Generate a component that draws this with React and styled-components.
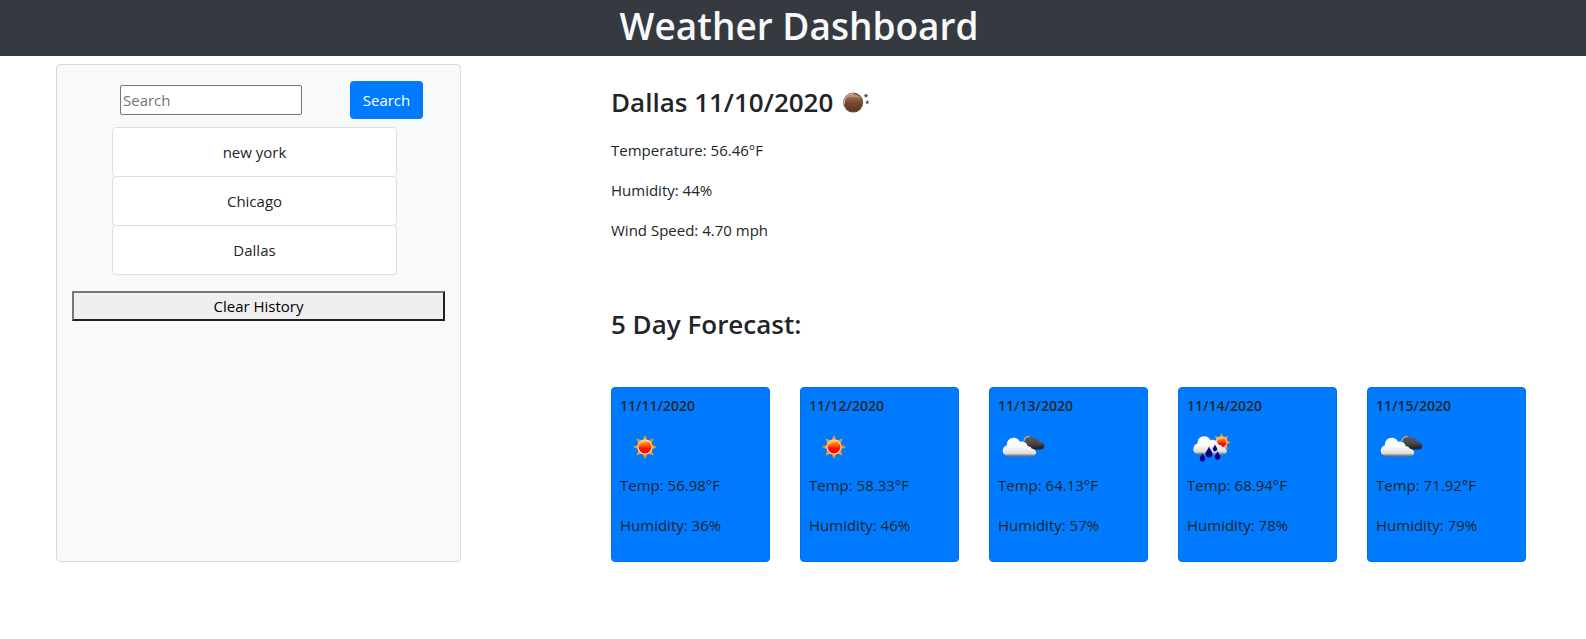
import React from "react";
import styled, { createGlobalStyle } from "styled-components";

const GlobalStyle = createGlobalStyle`
  *, *::before, *::after { box-sizing: border-box; }
  body {
    margin: 0;
    background: #fff;
    color: #212529;
    font-family: "Open Sans", "Noto Sans", sans-serif;
    font-size: 15px;
    line-height: 24px;
  }
`;

const Header = styled.header`
  background: #343a40;
  color: #f8f9fa;
  height: 56px;
  margin-bottom: 8px;
  text-align: center;
`;

const Title = styled.h1`
  margin: 0;
  font-size: 37px;
  font-weight: 600;
  line-height: 52px;
  padding-left: 12px;
`;

const Main = styled.main`
  display: grid;
  grid-template-columns: minmax(0, 27fr) minmax(0, 61fr);
  column-gap: 150px;
  padding: 0 60px 0 56px;
`;

const Sidebar = styled.aside`
  background: #f8f9fa;
  border: 1px solid #d8dadd;
  border-radius: 4px;
  padding: 16px 15px;
`;

const SearchForm = styled.form`
  display: flex;
  align-items: center;
  justify-content: space-between;
  padding: 0 22px 0 48px;
  margin-bottom: 8px;
`;

const SearchInput = styled.input`
  width: 182px;
  height: 30px;
  padding: 1px 2px;
  border: 1px solid #767676;
  border-radius: 2px;
  background: #fff;
  font: inherit;
  &::placeholder { color: #757575; opacity: 1; }
`;

const SearchButton = styled.button`
  width: 73px;
  height: 38px;
  padding: 0;
  border: 0;
  border-radius: 4px;
  background: #007bff;
  color: #fff;
  font: inherit;
`;

const HistoryList = styled.ul`
  list-style: none;
  margin: 0 48px 16px 40px;
  padding: 0;
`;

const HistoryItem = styled.li`
  background: #fff;
  border: 1px solid #dfdfdf;
  border-radius: 4px;
  padding: 12px 20px;
  text-align: center;
  & + & { margin-top: -1px; }
`;

const ClearButton = styled.button`
  display: block;
  width: 100%;
  height: 30px;
  padding: 0;
  border: 2px solid;
  border-color: #767676 #212121 #212121 #767676;
  background: #efefef;
  color: #000;
  font: inherit;
`;

const CurrentWeather = styled.section`
  padding-top: 13px;
  margin-bottom: 65px;
`;

const CityHeading = styled.h2`
  display: flex;
  align-items: center;
  margin: 0 0 11px;
  font-size: 26px;
  font-weight: 600;
  line-height: 34px;
`;

const ForecastHeading = styled.h2`
  margin: 0 0 46px;
  font-size: 26px;
  font-weight: 600;
  line-height: 34px;
`;

const Reading = styled.p`
  margin: 0 0 16px;
  white-space: nowrap;
`;

const CardRow = styled.div`
  display: grid;
  grid-template-columns: repeat(5, minmax(0, 1fr));
  column-gap: 30px;
`;

const Card = styled.article`
  background: #007bff;
  border: 1px solid #006fe6;
  border-radius: 4px;
  padding: 8px;
`;

const CardDate = styled.h3`
  margin: 0 0 6px;
  font-size: 14px;
  font-weight: 600;
  line-height: 20px;
`;

const Icon = styled.svg`
  display: block;
  flex: none;
  width: 50px;
  height: 50px;
  margin-bottom: ${(p) => (p.$inCard ? "1px" : "0")};
`;

const CLOUD = "M11 34.5C7.5 34.5 4.7 32 4.7 28.8C4.7 26 6.4 24 8.9 23.2C8.8 18.8 11.6 15.8 15.5 15.8C18.4 15.8 20.8 17.3 22 19.8C25.5 18.4 29.4 20.8 29.8 24.4C31.6 24.1 33 25 33.5 26.4C36.3 26.6 38.2 28.5 38.2 30.6C38.2 33 36.3 34.5 33.8 34.5Z";
const DARK_CLOUD = "M25.5 19C25.8 15.8 28.2 13.7 31.2 13.7C33.5 13.7 35 14.8 35.7 16.3C38.4 15.2 41.2 17.2 41.4 20.2C44.2 19.8 46.4 21.5 46.4 24C46.4 26 44.8 27.4 42.6 27.4H30Z";
const RAY = "M0 -12L2.6 -6.5H-2.6Z";
const DROP = "M0 -4.4C1 -2 2.8 -.6 2.8 1.3C2.8 3 1.5 4.2 0 4.2S-2.8 3 -2.8 1.3C-2.8 -.6 -1 -2 0 -4.4Z";
const STAR = "M0 -2.5L.7 -.8L2.5 -.7L1.1 .4L1.6 2.2L0 1.2L-1.6 2.2L-1.1 .4L-2.5 -.7L-.7 -.8Z";
const ANGLES = [0, 45, 90, 135, 180, 225, 270, 315];

function Sun({ id, transform }) {
  return (
    <g transform={transform}>
      <defs>
        <linearGradient id={id} x1="0" y1="0" x2="0" y2="1">
          <stop offset="0" stopColor="#ffa21a" />
          <stop offset=".4" stopColor="#ff5a08" />
          <stop offset=".6" stopColor="#ff1000" />
          <stop offset="1" stopColor="#f00" />
        </linearGradient>
      </defs>
      {ANGLES.map((a) => (
        <path key={a} d={RAY} fill="#f7981d" transform={`rotate(${a})`} />
      ))}
      <circle r="7.5" fill="#ffe6c4" />
      <circle r="6.5" fill={`url(#${id})`} />
      <path d="M-5.4 -1C-5 -6.6 1 -7 4 -4.6C0 -5 -4 -3.6 -5.4 -1Z" fill="#ffd38a" opacity=".6" />
    </g>
  );
}

function CloudFill({ id }) {
  return (
    <linearGradient id={id} x1="0" y1="0" x2="0" y2="1">
      <stop offset="0" stopColor="#fff" />
      <stop offset=".5" stopColor="#fafafa" />
      <stop offset=".84" stopColor="#dcdcdc" />
      <stop offset=".92" stopColor="#8d9296" />
      <stop offset="1" stopColor="#6c747c" />
    </linearGradient>
  );
}

function MoonIcon() {
  return (
    <Icon viewBox="3 -1 50 50" role="img" aria-label="Clear night">
      <defs>
        <linearGradient id="moon" x1="0" y1="0" x2="0" y2="1">
          <stop offset="0" stopColor="#b98a6c" />
          <stop offset=".35" stopColor="#87593b" />
          <stop offset=".5" stopColor="#744a30" />
          <stop offset="1" stopColor="#573722" />
        </linearGradient>
      </defs>
      <circle cx="23.2" cy="24.6" r="10" fill="#7c523a" />
      <circle cx="23.4" cy="24.8" r="9" fill="url(#moon)" />
      <path d="M14.4 25.5C14.2 19.5 18 15.8 23.5 15.7" fill="none" stroke="#e6d0c2" strokeWidth="1" />
      <path d="M17 19.5C19 16.4 27 16.2 30 20C26 18.6 21 18.4 17 19.5Z" fill="#d9b8a4" opacity=".5" />
      <path d={STAR} fill="#6e4a37" transform="translate(36 17.6)" />
      <path d={STAR} fill="#6e4a37" transform="translate(37.3 24.2) scale(.9)" />
    </Icon>
  );
}

function WeatherIcon({ kind, id }) {
  if (kind === "sun") {
    return (
      <Icon $inCard viewBox="0 0 50 50" role="img" aria-label="Clear">
        <Sun id={`${id}-sun`} transform="translate(25 25)" />
      </Icon>
    );
  }
  if (kind === "rain") {
    return (
      <Icon $inCard viewBox="0 0 50 50" role="img" aria-label="Rain">
        <defs><CloudFill id={`${id}-cloud`} /></defs>
        <Sun id={`${id}-sun`} transform="translate(34.5 20.3) scale(.78)" />
        <path d={CLOUD} fill={`url(#${id}-cloud)`} transform="translate(1.6 -1.6)" />
        <g fill="#00008b" stroke="#001f9c" strokeWidth=".3">
          <path d={DROP} transform="translate(15.4 35.6) scale(.95)" />
          <path d={DROP} transform="translate(22 30.3) scale(1.2)" />
          <path d={DROP} transform="translate(28 26) scale(.76)" />
          <path d={DROP} transform="translate(30.5 33.8) scale(.95)" />
        </g>
      </Icon>
    );
  }
  return (
    <Icon $inCard viewBox="0 0 50 50" role="img" aria-label="Broken clouds">
      <defs>
        <CloudFill id={`${id}-cloud`} />
        <linearGradient id={`${id}-dark`} x1="0" y1="0" x2="0" y2="1">
          <stop offset="0" stopColor="#626262" />
          <stop offset=".6" stopColor="#444" />
          <stop offset=".85" stopColor="#292929" />
          <stop offset="1" stopColor="#202020" />
        </linearGradient>
      </defs>
      <path d={DARK_CLOUD} fill={`url(#${id}-dark)`} />
      <path d="M26 19C26.3 16 28.4 14.3 31.8 14.5" fill="none" stroke="#b9b9b9" strokeWidth="1.2" />
      <path d={CLOUD} fill={`url(#${id}-cloud)`} />
    </Icon>
  );
}

const HISTORY = ["new york", "Chicago", "Dallas"];

const FORECAST = [
  { date: "11/11/2020", kind: "sun", temp: "56.98", humidity: 36 },
  { date: "11/12/2020", kind: "sun", temp: "58.33", humidity: 46 },
  { date: "11/13/2020", kind: "clouds", temp: "64.13", humidity: 57 },
  { date: "11/14/2020", kind: "rain", temp: "68.94", humidity: 78 },
  { date: "11/15/2020", kind: "clouds", temp: "71.92", humidity: 79 },
];

export default function App() {
  return (
    <>
      <GlobalStyle />
      <Header>
        <Title>Weather Dashboard</Title>
      </Header>
      <Main>
        <Sidebar>
          <SearchForm onSubmit={(e) => e.preventDefault()}>
            <SearchInput type="text" placeholder="Search" aria-label="Search" />
            <SearchButton type="submit">Search</SearchButton>
          </SearchForm>
          <HistoryList>
            {HISTORY.map((city) => (
              <HistoryItem key={city}>{city}</HistoryItem>
            ))}
          </HistoryList>
          <ClearButton type="button">Clear History</ClearButton>
        </Sidebar>
        <div>
          <CurrentWeather>
            <CityHeading>
              Dallas 11/10/2020
              <MoonIcon />
            </CityHeading>
            <Reading>Temperature: 56.46°F</Reading>
            <Reading>Humidity: 44%</Reading>
            <Reading>Wind Speed: 4.70 mph</Reading>
          </CurrentWeather>
          <section>
            <ForecastHeading>5 Day Forecast:</ForecastHeading>
            <CardRow>
              {FORECAST.map((day, i) => (
                <Card key={day.date}>
                  <CardDate>{day.date}</CardDate>
                  <WeatherIcon kind={day.kind} id={`day${i}`} />
                  <Reading>Temp: {day.temp}°F</Reading>
                  <Reading>Humidity: {day.humidity}%</Reading>
                </Card>
              ))}
            </CardRow>
          </section>
        </div>
      </Main>
    </>
  );
}
